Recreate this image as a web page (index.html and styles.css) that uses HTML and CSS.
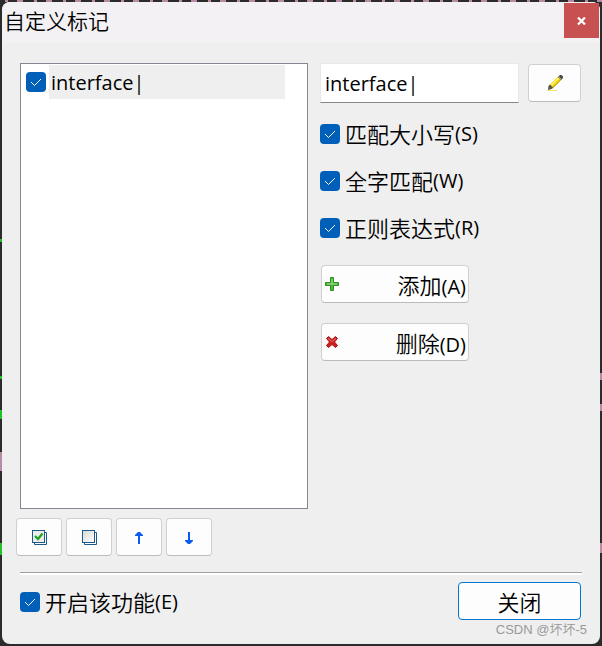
FILE: index.html
```html
<!DOCTYPE html>
<html lang="zh-CN">
<head>
  <meta charset="UTF-8" />
  <meta name="viewport" content="width=device-width, initial-scale=1.0"/>
  <title>自定义标记</title>
  <link rel="stylesheet" href="styles.css">
</head>
<body>

  <div class="dialog">
    <header class="title-bar">
      <h1>自定义标记</h1>
      <button type="button" class="close-x" aria-label="关闭窗口">
        <svg width="9" height="8" viewBox="0 0 9 8"><path d="M1 0.5L8 7.5M8 0.5L1 7.5" stroke="#fff" stroke-width="2.2"/></svg>
      </button>
    </header>

    <main class="content">
      <section class="marks">
        <ul class="mark-list">
          <li><label><input type="checkbox" checked /><span class="mark-name">interface|</span></label></li>
        </ul>
        <div class="toolbar">
          <button type="button" class="btn" aria-label="全选">
            <svg width="16" height="16" viewBox="0 0 16 16">
              <path d="M13 3.5H15.5V15.5H3.5V13" fill="#fff" stroke="#1d5a8c"/>
              <rect x="1.5" y="1.5" width="12" height="12" fill="#ececea" stroke="#1d5a8c"/>
              <path d="M4 7L7 10L11.5 4.5" fill="none" stroke="#1fa01f" stroke-width="2.2"/>
            </svg>
          </button>
          <button type="button" class="btn" aria-label="全不选">
            <svg width="16" height="16" viewBox="0 0 16 16">
              <linearGradient id="sheet" x1="0" y1="0" x2="1" y2="1"><stop offset="0" stop-color="#d8d8d4"/><stop offset="1" stop-color="#fff"/></linearGradient>
              <path d="M13 3.5H15.5V15.5H3.5V13" fill="#fff" stroke="#1d5a8c"/>
              <rect x="1.5" y="1.5" width="12" height="12" fill="url(#sheet)" stroke="#1d5a8c"/>
            </svg>
          </button>
          <button type="button" class="btn" aria-label="上移">
            <svg width="16" height="16" viewBox="0 0 16 16"><path d="M7 15V7H4V6L7 3H9L12 6V7H9V15Z" fill="#0a5cf0"/></svg>
          </button>
          <button type="button" class="btn" aria-label="下移">
            <svg width="16" height="16" viewBox="0 0 16 16"><path d="M7 3V11H4V12L7 15H9L12 12V11H9V3Z" fill="#0a5cf0"/></svg>
          </button>
        </div>
      </section>

      <section class="options">
        <div class="edit-row">
          <input type="text" class="mark-input" value="interface|" aria-label="标记" />
          <button type="button" class="btn edit-btn" aria-label="编辑">
            <svg width="18" height="18" viewBox="0 0 18 18">
              <path d="M1 16.5H11" stroke="#f2e36a"/>
              <path d="M2 15.5L3 11.5L12 2.5L15.5 5.5L6.5 14.5Z" fill="#f0dc14"/>
              <path d="M4 12.5L12.5 4" stroke="#fff27a" stroke-width="1.2"/>
              <path d="M6 14.5L15 5.5" stroke="#a98f08"/>
              <path d="M2 16L2.5 12L4 10.5L7 13.5L5.5 15Z" fill="#555"/>
              <path d="M12 3L14 1H15.5L17 2.5V4L15 6Z" fill="#4a4a4a"/>
              <path d="M12.5 2.5L15.5 5.5" stroke="#aaa"/>
            </svg>
          </button>
        </div>
        <div class="checks">
          <label><input type="checkbox" checked />匹配大小写<span class="key">(S)</span></label>
          <label><input type="checkbox" checked />全字匹配<span class="key">(W)</span></label>
          <label><input type="checkbox" checked />正则表达式<span class="key">(R)</span></label>
        </div>
        <div class="actions">
          <button type="button" class="btn action-btn">
            <svg width="14" height="14" viewBox="0 0 14 14">
              <path d="M5.5 0.5H8.5V5.5H13.5V8.5H8.5V13.5H5.5V8.5H0.5V5.5H5.5Z" fill="#4fb83c" stroke="#2f8f27"/>
              <path d="M7 2V7H12M2 7H7" fill="none" stroke="#a5e08c"/>
            </svg>
            <span>添加<span class="key">(A)</span></span>
          </button>
          <button type="button" class="btn action-btn">
            <svg width="14" height="14" viewBox="0 0 14 14">
              <path d="M3.5 1.5L7 4.5L10.5 1.5L12.5 3.5L9.5 7L12.5 10.5L10.5 12.5L7 9.5L3.5 12.5L1.5 10.5L4.5 7L1.5 3.5Z" fill="#d01c1c" stroke="#a01818"/>
              <path d="M3 3.5L7 6.5L11 3.5" fill="none" stroke="#ee7777"/>
            </svg>
            <span>删除<span class="key">(D)</span></span>
          </button>
        </div>
      </section>
    </main>

    <footer class="bottom-bar">
      <label><input type="checkbox" checked />开启该功能<span class="key">(E)</span></label>
      <button type="button" class="btn close-btn">关闭</button>
    </footer>

    <div class="watermark">CSDN @坏坏-5</div>
  </div>

</body>
</html>
```
FILE: styles.css
```css
* {
  box-sizing: border-box;
}

body {
  margin: 0;
  padding: 2px;
  min-height: 100vh;
  display: flex;
  font-family: "Open Sans", "Noto Sans CJK SC", sans-serif;
  font-size: 22px;
  font-weight: 360;
  color: #000;
  /* bits of the editor text behind the dialog */
  background:
    linear-gradient(#2b2b2b 237px, #22c32a 237px 240px, #2b2b2b 240px 374px, #22c32a 374px 377px, #2b2b2b 377px 408px, #22c32a 408px 417px, #2b2b2b 417px 450px, #b78ba5 450px 469px, #2b2b2b 469px 541px, #22c32a 541px 553px, #2b2b2b 553px) 0 2px / 2px 100% no-repeat,
    linear-gradient(#2b2b2b 371px, #b78ba5 371px 378px, #2b2b2b 378px 402px, #b78ba5 402px 409px, #2b2b2b 409px 541px, #b78ba5 541px 551px, #2b2b2b 551px) 100% 2px / 2px 100% no-repeat,
    repeating-linear-gradient(90deg, #2b2b2b 0 5px, #b78ba5 5px 8px, #2b2b2b 8px 17px, #b78ba5 17px 23px, #2b2b2b 23px 29px) 0 0 / 100% 2px no-repeat #2b2b2b;
}

.dialog {
  flex: 1;
  min-width: 0;
  display: flex;
  flex-direction: column;
  position: relative;
  background-color: #efefef;
  border-radius: 8px;
}

.title-bar {
  display: flex;
  justify-content: space-between;
  align-items: flex-start;
  height: 41px;
  padding: 1px 1px 0 2px;
  background-color: #f3f1f4;
  border-radius: 8px 8px 0 0;
}

.title-bar h1 {
  margin: 0;
  font-size: 21px;
  font-weight: inherit;
  line-height: 36px;
}

.close-x {
  display: flex;
  align-items: center;
  justify-content: center;
  width: 35px;
  height: 35px;
  padding: 0;
  border: none;
  background-color: #c75050;
}

.content {
  flex: 1;
  display: flex;
  gap: 12px;
  padding: 20px 18px 16px;
}

.marks {
  flex: 0 0 288px;
  display: flex;
  flex-direction: column;
}

.mark-list {
  flex: 1;
  margin: 0;
  padding: 1px 22px 0 5px;
  list-style: none;
  border: 1px solid #828790;
  background-color: #fff;
}

.mark-list label {
  gap: 3px;
}

.mark-name {
  flex: 1;
  padding: 2px 0 0 2px;
  font-size: 20px;
  font-weight: normal;
  line-height: 32px;
  background-color: #efefef;
}

.toolbar {
  display: flex;
  gap: 4px;
  margin: 9px 0 0 -4px;
}

label {
  display: flex;
  align-items: center;
  line-height: 30px;
}

.key {
  font-size: 20px;
  font-weight: normal;
}

input[type="checkbox"] {
  appearance: none;
  flex: none;
  width: 20px;
  height: 20px;
  margin: 0;
  border-radius: 4px;
}

input[type="checkbox"]:checked {
  background: #005fb8 url("data:image/svg+xml,%3Csvg xmlns='http://www.w3.org/2000/svg' viewBox='0 0 20 20'%3E%3Cpath d='M5 10L8.5 13.5L15 7' fill='none' stroke='white' stroke-width='1'/%3E%3C/svg%3E");
}

.btn {
  display: flex;
  align-items: center;
  justify-content: center;
  width: 46px;
  height: 38px;
  padding: 0;
  font: inherit;
  color: inherit;
  background-color: #fdfdfd;
  border: 1px solid #d0d0d0;
  border-bottom-color: #bbb;
  border-radius: 4px;
}

.options {
  flex: 1;
  min-width: 0;
}

.edit-row {
  display: flex;
  align-items: center;
  gap: 9px;
  padding-right: 1px;
}

.mark-input {
  flex: 1;
  min-width: 0;
  height: 40px;
  padding: 0 4px;
  font: inherit;
  font-size: 20px;
  font-weight: normal;
  background-color: #fff;
  border: 1px solid #e8e8e8;
  border-bottom-color: #868686;
}

.edit-btn {
  flex: none;
  width: 53px;
}

.checks {
  display: flex;
  flex-direction: column;
  gap: 17px;
  margin-top: 16px;
}

.checks label,
.bottom-bar label {
  gap: 5px;
}

.checks .key,
.bottom-bar .key {
  margin-left: -5px;
}

.actions {
  display: flex;
  flex-direction: column;
  gap: 20px;
  margin: 22px 0 0 1px;
}

.action-btn {
  justify-content: space-between;
  width: 148px;
  padding: 0 2px 0 3px;
}

.bottom-bar {
  display: flex;
  justify-content: space-between;
  align-items: center;
  margin: 0 18px;
  padding: 9px 1px 24px 0;
  border-top: 1px solid #a0a0a0;
  box-shadow: inset 0 2px #fff;
}

.bottom-bar label {
  padding-top: 2px;
}

.close-btn {
  width: 123px;
  border-color: #0078d4;
}

.watermark {
  position: absolute;
  right: 13px;
  bottom: 6px;
  font-family: "Liberation Sans", "Noto Sans CJK SC", sans-serif;
  font-size: 13px;
  line-height: 16px;
  color: #999;
}
```
